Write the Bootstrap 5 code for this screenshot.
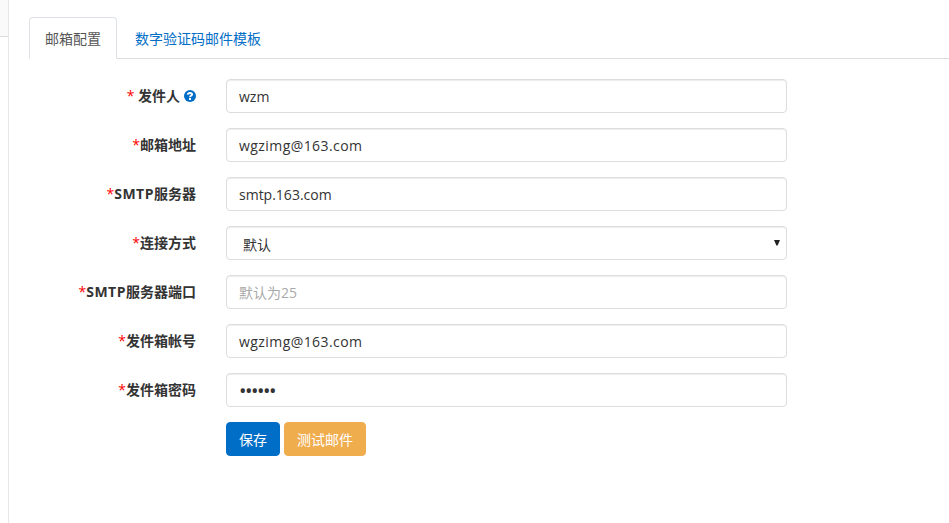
<!DOCTYPE html>
<html lang="zh-CN">
<head>
  <meta charset="UTF-8">
  <meta name="viewport" content="width=device-width, initial-scale=1.0">
  <title>邮箱配置</title>
  <link href="https://cdn.jsdelivr.net/npm/bootstrap@5.3.0/dist/css/bootstrap.min.css" rel="stylesheet">
  <style>
    :root {
      --main-blue: #006dc6;
      --line: #ddd;
    }

    body {
      font-family: "Open Sans", "Noto Sans CJK SC", sans-serif;
      font-size: 14px;
      line-height: 20px;
      color: #333;
      height: 100vh;
      overflow: hidden;
    }

    .side-strip {
      width: 9px;
      border-right: 1px solid #e8e8e8;
    }

    .side-head {
      height: 37px;
      background-color: #fafafa;
      border-bottom: 1px solid var(--line);
    }

    .main-panel {
      padding: 17px 0 0 20px;
    }

    .nav-tabs {
      --bs-nav-tabs-border-color: #ddd;
      --bs-nav-tabs-border-radius: 4px;
      --bs-nav-tabs-link-active-color: #555;
      --bs-nav-link-color: var(--main-blue);
      --bs-nav-link-padding-x: 15px;
      --bs-nav-link-padding-y: 10px;
      gap: 2px;
      height: 42px;
      margin-bottom: 20px;
    }

    .nav-tabs .nav-link {
      height: 42px;
      line-height: 22px;
    }

    .form-line {
      height: 34px;
      margin-bottom: 15px;
    }

    .line-label {
      width: 167px;
      margin-right: 30px;
      font-weight: 700;
      text-align: right;
      white-space: nowrap;
    }

    .label-latin {
      letter-spacing: .5px;
    }

    .req {
      color: #f00;
      font-weight: 400;
    }

    .line-field {
      width: 561px;
    }

    .form-control, .form-select {
      height: 34px;
      padding: 6px 12px;
      font-size: 14px;
      line-height: 20px;
      color: #333;
      border: 1px solid var(--line);
      border-radius: 4px;
      box-shadow: inset 0 1px 1px rgba(0, 0, 0, .075);
    }

    .form-control::placeholder {
      color: #aaa;
    }

    .mail-input {
      letter-spacing: .43px;
    }

    .pass-input {
      font-size: 20px;
      letter-spacing: -1.5px;
    }

    .form-select {
      padding: 8px 16px 4px;
      background-image: none;
    }

    .select-arrow {
      right: 7px;
      top: 13px;
    }

    .help-icon {
      margin-left: 4px;
      vertical-align: -1px;
    }

    .form-actions {
      margin-left: 197px;
    }

    .form-actions .btn {
      height: 34px;
      padding: 7px 12px 5px;
      font-size: 14px;
      line-height: 20px;
      border-radius: 4px;
    }

    .btn-save {
      --bs-btn-color: #fff;
      --bs-btn-bg: var(--main-blue);
      --bs-btn-border-color: var(--main-blue);
    }

    .btn-test {
      --bs-btn-color: #fff;
      --bs-btn-bg: #f0ad4e;
      --bs-btn-border-color: #f0ad4e;
    }
  </style>
</head>
<body class="d-flex bg-white">
  <div class="side-strip flex-shrink-0">
    <div class="side-head"></div>
  </div>
  <div class="main-panel flex-grow-1">
    <ul class="nav nav-tabs">
      <li class="nav-item"><a class="nav-link active" href="#">邮箱配置</a></li>
      <li class="nav-item"><a class="nav-link" href="#">数字验证码邮件模板</a></li>
    </ul>
    <form>
      <div class="form-line d-flex align-items-center">
        <label class="line-label" for="sender"><span class="req">*</span> 发件人<svg class="help-icon" width="12" height="12" viewBox="0 0 12 12"><circle cx="6" cy="6" r="6" fill="#006dc6"/><path d="M3.8 4.6C4 2.5 8.1 2.5 8.1 4.5C8.1 5.8 6 5.8 6 7.2" fill="none" stroke="#fff" stroke-width="1.9"/><path d="M5 8.1h2v1.8H5z" fill="#fff"/></svg></label>
        <div class="line-field"><input type="text" class="form-control" id="sender" value="wzm"></div>
      </div>
      <div class="form-line d-flex align-items-center">
        <label class="line-label" for="address"><span class="req">*</span>邮箱地址</label>
        <div class="line-field"><input type="text" class="form-control mail-input" id="address" value="wgzimg@163.com"></div>
      </div>
      <div class="form-line d-flex align-items-center">
        <label class="line-label" for="smtp"><span class="req">*</span><span class="label-latin">SMTP</span>服务器</label>
        <div class="line-field"><input type="text" class="form-control" id="smtp" value="smtp.163.com"></div>
      </div>
      <div class="form-line d-flex align-items-center">
        <label class="line-label" for="secure"><span class="req">*</span>连接方式</label>
        <div class="line-field position-relative">
          <select class="form-select" id="secure">
            <option selected>默认</option>
          </select>
          <svg class="select-arrow position-absolute pe-none" width="6" height="7" viewBox="0 0 6 7"><path d="M0 1h6L3.6 6.5H2.4z" fill="#222"/></svg>
        </div>
      </div>
      <div class="form-line d-flex align-items-center">
        <label class="line-label" for="port"><span class="req">*</span><span class="label-latin">SMTP</span>服务器端口</label>
        <div class="line-field"><input type="text" class="form-control" id="port" placeholder="默认为25"></div>
      </div>
      <div class="form-line d-flex align-items-center">
        <label class="line-label" for="account"><span class="req">*</span>发件箱帐号</label>
        <div class="line-field"><input type="text" class="form-control mail-input" id="account" value="wgzimg@163.com"></div>
      </div>
      <div class="form-line d-flex align-items-center">
        <label class="line-label" for="password"><span class="req">*</span>发件箱密码</label>
        <div class="line-field"><input type="password" class="form-control pass-input" id="password" value="123456"></div>
      </div>
      <div class="form-actions d-flex gap-1">
        <button type="button" class="btn btn-save">保存</button>
        <button type="button" class="btn btn-test">测试邮件</button>
      </div>
    </form>
  </div>
<script src="https://cdn.jsdelivr.net/npm/bootstrap@5.3.0/dist/js/bootstrap.bundle.min.js"></script>
</body>
</html>
